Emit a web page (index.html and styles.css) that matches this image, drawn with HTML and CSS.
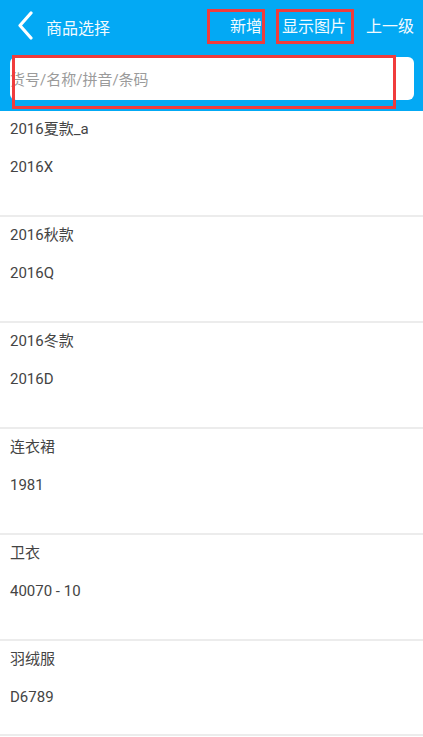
FILE: index.html
```html
<!DOCTYPE html>
<html>
<head>
<meta charset="utf-8">
<link rel="stylesheet" href="styles.css">
</head>
<body>
<div class="header">
  <div class="topbar">
    <div class="back">
      <svg width="18" height="30" viewBox="0 0 18 30"><polyline points="14,2 3,14.5 14,27" fill="none" stroke="#fff" stroke-width="3.2" stroke-linecap="round" stroke-linejoin="round"/></svg>
    </div>
    <div class="title">商品选择</div>
    <div class="spacer"></div>
    <div class="action act-new">新增<span class="mark mark-new"></span></div>
    <div class="action act-img">显示图片<span class="mark mark-img"></span></div>
    <div class="action act-up">上一级</div>
  </div>
  <div class="searchwrap">
    <div class="search"><span class="ph">货号/名称/拼音/条码</span></div>
    <span class="mark mark-search"></span>
  </div>
</div>
<div class="list">
  <div class="item"><div class="name">2016夏款_a</div><div class="code">2016X</div></div>
  <div class="item"><div class="name">2016秋款</div><div class="code">2016Q</div></div>
  <div class="item"><div class="name">2016冬款</div><div class="code">2016D</div></div>
  <div class="item"><div class="name">连衣裙</div><div class="code">1981</div></div>
  <div class="item"><div class="name">卫衣</div><div class="code">40070 - 10</div></div>
  <div class="item last"><div class="name">羽绒服</div><div class="code">D6789</div></div>
</div>
</body>
</html>
```
FILE: styles.css
```css
html, body {
  margin: 0;
  padding: 0;
  background: #fff;
  font-family: Roboto, "Noto Sans CJK SC", sans-serif;
  overflow: hidden;
}
.header {
  background: #03a9f4;
  height: 111px;
  color: #f2fafe;
}
.topbar {
  height: 53px;
  display: flex;
  align-items: center;
  padding-right: 9px;
}
.back {
  width: 46px;
  display: flex;
  justify-content: flex-start;
  padding-left: 17px;
  box-sizing: border-box;
  height: 30px;
  margin-top: -1px;
}
.title {
  font-size: 16px;
}
.spacer { flex: 1; }
.action {
  position: relative;
  font-size: 16px;
  line-height: 20px;
}
.act-new { margin-right: 20px; }
.act-img { margin-right: 20px; }
.mark {
  position: absolute;
  border: 3px solid #f03c3c;
  box-sizing: border-box;
}
.mark-new { left: -23px; top: -8px; width: 58px; height: 35px; }
.mark-img { left: -6px; top: -8px; width: 78px; height: 35px; }
.searchwrap {
  position: relative;
  padding: 4px 9px 0 10px;
}
.search {
  height: 43px;
  background: #fff;
  border-radius: 6px;
  display: flex;
  align-items: center;
  overflow: hidden;
}
.ph {
  color: #9b9b9b;
  font-size: 15px;
  white-space: nowrap;
}
.mark-search { left: 12px; top: 2px; width: 384px; height: 54px; }
.item {
  height: 104px;
  border-bottom: 2px solid #ececec;
  padding-left: 10px;
  color: #444;
  font-size: 15px;
}
.item.last { height: 93px; }
.name {
  padding-top: 8px;
  line-height: 20px;
}
.code {
  margin-top: 18px;
  line-height: 20px;
}
```
